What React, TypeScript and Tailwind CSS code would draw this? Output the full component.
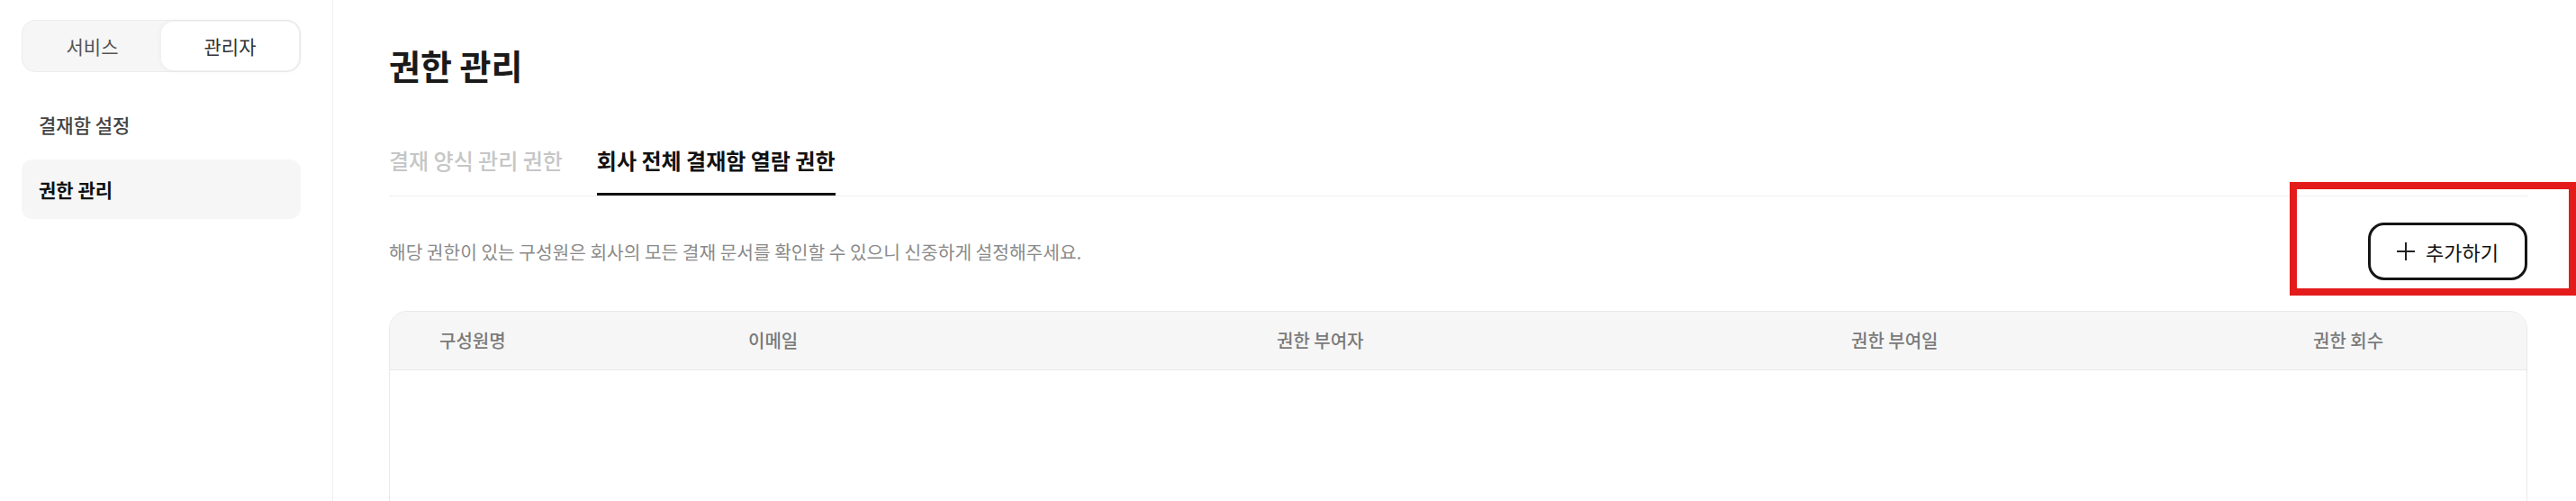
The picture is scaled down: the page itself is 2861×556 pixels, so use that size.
import React, { useState } from 'react';

const font = 'font-["Noto_Sans_CJK_KR","Noto_Sans",sans-serif]';

const columns = [
  { label: '구성원명', width: 'w-[343px]' },
  { label: '이메일', width: 'w-[587px]' },
  { label: '권한 부여자', width: 'w-[638px]' },
  { label: '권한 부여일', width: 'w-[513px]' },
  { label: '권한 회수', width: 'flex-1' },
];

function Sidebar() {
  const [mode, setMode] = useState<'service' | 'admin'>('admin');
  const menu = ['결재함 설정', '권한 관리'];
  const active = '권한 관리';

  return (
    <aside className="w-[370px] shrink-0 border-r border-[#efefef] px-[24px] pt-[22px]">
      {/* 서비스 / 관리자 toggle */}
      <div className="flex h-[58px] w-[310px] rounded-[15px] border border-[#ececec] bg-[#f6f6f6] p-[1px]">
        <button
          onClick={() => setMode('service')}
          className={`flex-1 rounded-[14px] text-[21px] leading-none ${
            mode === 'service' ? 'bg-white text-[#333] shadow-[0_0_6px_rgba(0,0,0,0.06)]' : 'text-[#555]'
          }`}
        >
          서비스
        </button>
        <button
          onClick={() => setMode('admin')}
          className={`flex-1 rounded-[14px] text-[21px] leading-none ${
            mode === 'admin' ? 'bg-white text-[#333] shadow-[0_0_6px_rgba(0,0,0,0.06)]' : 'text-[#555]'
          }`}
        >
          관리자
        </button>
      </div>

      <nav className="mt-[25px] flex w-[310px] flex-col gap-[6px]">
        {menu.map((item) => (
          <div
            key={item}
            className={`flex h-[66px] items-center rounded-[12px] px-[19px] text-[21px] leading-none ${
              item === active ? 'bg-[#f6f6f6] font-semibold text-[#111]' : 'font-medium text-[#444]'
            }`}
          >
            {item}
          </div>
        ))}
      </nav>
    </aside>
  );
}

export default function App() {
  const [tab, setTab] = useState(1);
  const tabs = ['결재 양식 관리 권한', '회사 전체 결재함 열람 권한'];

  return (
    <div className={`relative flex h-[556px] w-full overflow-hidden bg-white ${font}`}>
      <Sidebar />

      <main className="flex min-w-0 flex-1 flex-col pl-[62px] pr-[54px] pt-[53px]">
        <h1 className="text-[38px] font-bold leading-none text-[#1a1a1a]">권한 관리</h1>

        {/* Tabs */}
        <div className="mt-[75px] flex gap-[38px] border-b border-[#efefef]">
          {tabs.map((t, i) => (
            <button
              key={t}
              onClick={() => setTab(i)}
              className={`border-b-[3px] pb-[24px] text-[24px] leading-none ${
                tab === i ? 'border-[#111] font-semibold text-[#111]' : 'border-transparent font-medium text-[#c6c6c6]'
              }`}
            >
              {t}
            </button>
          ))}
        </div>

        <div className="mt-[29px] flex h-[64px] items-center justify-between">
          <p className="text-[20.3px] leading-none text-[#8a8a8a]">
            해당 권한이 있는 구성원은 회사의 모든 결재 문서를 확인할 수 있으니 신중하게 설정해주세요.
          </p>
          <button className="flex h-[64px] w-[177px] items-center justify-center gap-[12px] rounded-[18px] border-[3px] border-[#151515] bg-white text-[22px] leading-none text-[#111]">
            <svg width="20" height="20" viewBox="0 0 20 20" fill="none">
              <path d="M10 0v20M0 10h20" stroke="#222" strokeWidth="2" />
            </svg>
            추가하기
          </button>
        </div>

        {/* Member table */}
        <div className="mt-[34px] flex h-[300px] shrink-0 flex-col overflow-hidden rounded-[20px] border border-[#e9e9e9]">
          <div className="flex h-[65px] shrink-0 items-center border-b border-[#e9e9e9] bg-[#f6f6f6] pl-[55px] text-[20px] font-medium leading-none text-[#7a7a7a]">
            {columns.map((c) => (
              <div key={c.label} className={c.width}>
                {c.label}
              </div>
            ))}
          </div>
          <div className="flex-1 bg-white" />
        </div>
      </main>

      {/* highlight annotation around the add button */}
      <div className="pointer-events-none absolute left-[2543px] top-[202px] h-[126px] w-[318px] border-[8px] border-[#e31b1b]" />
    </div>
  );
}
